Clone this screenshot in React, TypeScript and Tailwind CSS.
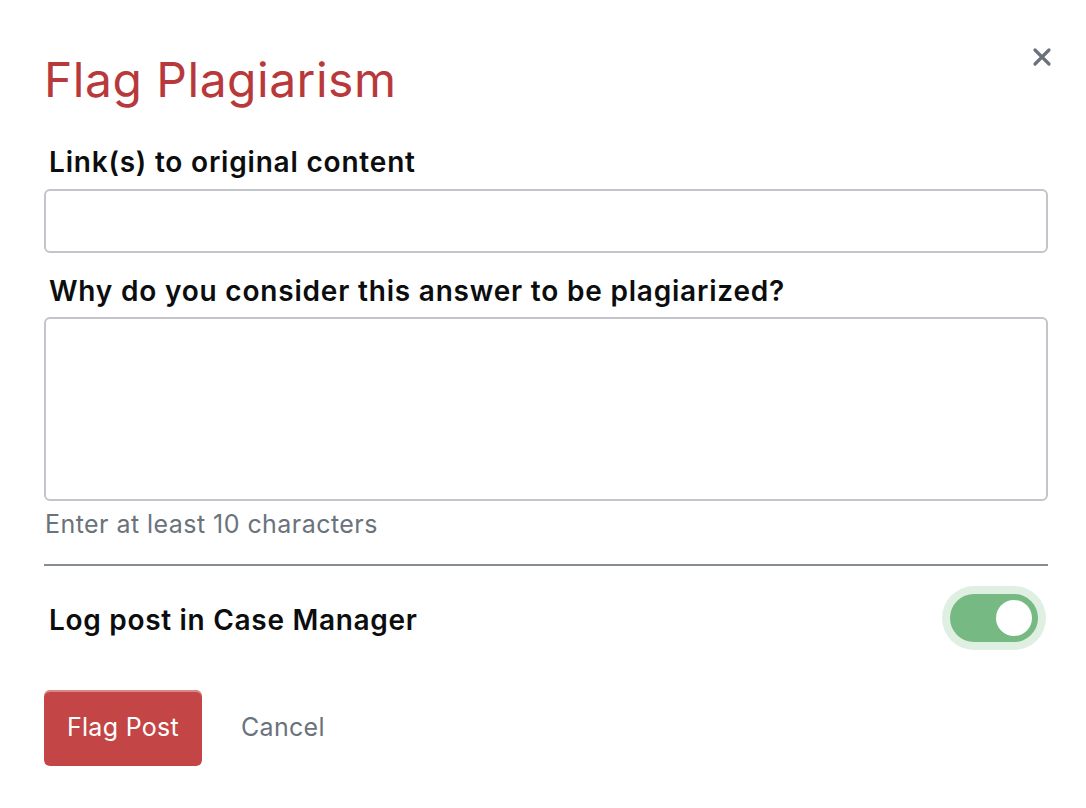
import React, { useState } from 'react';

const font = { fontFamily: 'Inter, "Noto Sans", sans-serif' };

export default function App() {
    const [logCase, setLogCase] = useState(true);

    return (
        <div className="min-h-[808px] w-[1086px] bg-white" style={font}>
            <div className="pl-[44px] pr-[38px] pt-[50px]">
                {/* Header */}
                <div className="flex items-start justify-between">
                    <h1 className="text-[48px] leading-[60px] font-normal tracking-[0.5px] text-[#b8393b]">Flag Plagiarism</h1>
                    <button className="mt-[-5px] mr-[-6px] flex h-[24px] w-[24px] items-center justify-center text-[#6a737c]">
                        <svg width="20" height="20" viewBox="0 0 20 20">
                            <path d="M3 3 L17 17 M17 3 L3 17" stroke="currentColor" strokeWidth="3.2" strokeLinecap="round" />
                        </svg>
                    </button>
                </div>

                {/* Fields */}
                <div className="mt-[36px]">
                    <label className="block pl-[5px] text-[28px] leading-[32px] font-semibold tracking-[0.8px] text-[#0c0d0e]">
                        Link(s) to original content
                    </label>
                    <input className="mt-[11px] block h-[64px] w-[1004px] rounded-[6px] border-2 border-[#c2c6ca] bg-white outline-none" />

                    <label className="mt-[22px] block pl-[5px] text-[28px] leading-[32px] font-semibold tracking-[0.8px] text-[#0c0d0e]">
                        Why do you consider this answer to be plagiarized?
                    </label>
                    <textarea className="mt-[10px] block h-[184px] w-[1004px] resize-none rounded-[6px] border-2 border-[#c2c6ca] bg-white outline-none" />
                    <p className="mt-[9px] pl-[1px] text-[25px] leading-[28px] tracking-[0.45px] text-[#6a737c]">Enter at least 10 characters</p>
                </div>

                <div className="mt-[26px] h-[2px] w-[1004px] bg-[#878d94]" />

                {/* Toggle row */}
                <div className="mt-[20px] flex w-[1004px] items-center justify-between">
                    <span className="pl-[5px] pt-[4px] text-[28px] font-semibold tracking-[0.7px] text-[#0c0d0e]">Log post in Case Manager</span>
                    <button
                        onClick={() => setLogCase(!logCase)}
                        className="mr-[2px] flex h-[64px] w-[104px] items-center justify-center rounded-full bg-[#dff0e3]"
                    >
                        <span className="flex h-[48px] w-[88px] items-center justify-end rounded-full bg-[#76b982] pr-[6px]">
                            <span className="h-[36px] w-[36px] rounded-full bg-white" />
                        </span>
                    </button>
                </div>

                {/* Actions */}
                <div className="mt-[40px] flex items-center gap-[39px]">
                    <button className="h-[76px] w-[158px] rounded-[6px] bg-[#c34545] text-[25px] tracking-[0.3px] text-white shadow-[inset_0_2px_0_rgba(255,255,255,0.35)]">
                        Flag Post
                    </button>
                    <button className="text-[25px] tracking-[0.3px] text-[#6a737c]">Cancel</button>
                </div>
            </div>
        </div>
    );
}
